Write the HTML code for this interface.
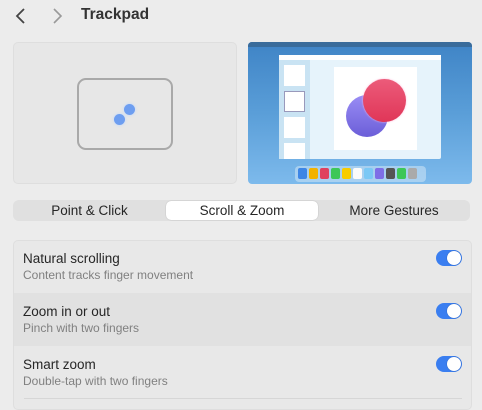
<!DOCTYPE html>
<html><head><style>
*{margin:0;padding:0;box-sizing:border-box}
body{width:482px;height:402px;overflow:hidden;background:#ececec;font-family:"Liberation Sans",sans-serif;position:relative}
.a{position:absolute}
.t{font-size:13.5px;color:#262626}
.s{font-size:12px;color:#808080}
.tg{position:absolute;left:436px;width:26px;height:16px;border-radius:8px;background:#3a7ef0}
.tg:after{content:"";position:absolute;right:1px;top:1px;width:14px;height:14px;border-radius:50%;background:#fff;box-shadow:0 0 1px rgba(0,0,0,.4)}
</style></head><body>
<svg class="a" style="left:14px;top:7px" width="14" height="18"><path d="M10 2 L3 9 L10 16" stroke="#444" stroke-width="1.8" fill="none"/></svg>
<svg class="a" style="left:50px;top:7px" width="14" height="18"><path d="M4 2 L11 9 L4 16" stroke="#999" stroke-width="1.6" fill="none"/></svg>
<div class="a" style="left:81px;top:6px;font-size:15.5px;font-weight:bold;color:#333">Trackpad</div>

<div class="a" style="left:13px;top:42px;width:224px;height:142px;background:#e7e7e7;border:1px solid #dedede;border-radius:5px"></div>
<div class="a" style="left:77px;top:78px;width:96px;height:72px;border:2px solid #a9a9a9;border-radius:9px"></div>
<div class="a" style="left:124px;top:104px;width:11px;height:11px;border-radius:50%;background:#6e9ef0;box-shadow:0 0 3px #bcd6ff"></div>
<div class="a" style="left:114px;top:114px;width:11px;height:11px;border-radius:50%;background:#6e9ef0;box-shadow:0 0 3px #bcd6ff"></div>

<div class="a" style="left:248px;top:42px;width:224px;height:142px;border-radius:4px;background:linear-gradient(#3f84c6,#5a9ed8 50%,#7dbaec);overflow:hidden">
<div class="a" style="left:0;top:0;width:224px;height:5px;background:#3a6c9b"></div>
<div class="a" style="left:31px;top:13px;width:162px;height:104px;background:#e6f3fb;border-radius:2px">
<div class="a" style="left:0;top:0;width:162px;height:5px;background:#fff"></div>
<div class="a" style="left:0;top:5px;width:31px;height:99px;background:#c9e3f3"></div>
<div class="a" style="left:5px;top:10px;width:21px;height:21px;background:#fff"></div>
<div class="a" style="left:5px;top:36px;width:21px;height:21px;background:#fff;border:1px solid #99b"></div>
<div class="a" style="left:5px;top:62px;width:21px;height:21px;background:#fff"></div>
<div class="a" style="left:5px;top:88px;width:21px;height:16px;background:#fff"></div>
<div class="a" style="left:55px;top:12px;width:83px;height:83px;background:#fff"></div>
<div class="a" style="left:67px;top:40px;width:42px;height:42px;border-radius:50%;background:linear-gradient(#9a8df5,#6b5ed8)"></div>
<div class="a" style="left:84px;top:24px;width:43px;height:43px;border-radius:50%;background:linear-gradient(#ec5b7a,#e03658);box-shadow:0 0 2px #fbd"></div>
</div>
<div class="a" style="left:47px;top:124px;width:131px;height:16px;background:rgba(200,225,245,.6);border-radius:4px;display:flex;gap:2px;padding:2px 3px">
<i style="width:9px;height:11px;background:#3d86e6;border-radius:2px"></i><i style="width:9px;height:11px;background:#f2b200;border-radius:2px"></i><i style="width:9px;height:11px;background:#e0405e;border-radius:2px"></i><i style="width:9px;height:11px;background:#3dc758;border-radius:2px"></i><i style="width:9px;height:11px;background:#f7cc00;border-radius:2px"></i><i style="width:9px;height:11px;background:#fafafa;border-radius:2px"></i><i style="width:9px;height:11px;background:#7bc8f5;border-radius:2px"></i><i style="width:9px;height:11px;background:#7e6ee6;border-radius:2px"></i><i style="width:9px;height:11px;background:#555;border-radius:2px"></i><i style="width:9px;height:11px;background:#3dc758;border-radius:2px"></i><i style="width:9px;height:11px;background:#aaa;border-radius:2px"></i>
</div>
</div>

<div class="a" style="left:13px;top:200px;width:457px;height:21px;background:#e0e0e0;border-radius:6px"></div>
<div class="a" style="left:166px;top:201px;width:152px;height:19px;background:#fff;border-radius:5px;box-shadow:0 0 1px rgba(0,0,0,.3)"></div>
<div class="a t" style="left:13px;top:203px;width:153px;text-align:center">Point &amp; Click</div>
<div class="a t" style="left:166px;top:203px;width:152px;text-align:center">Scroll &amp; Zoom</div>
<div class="a t" style="left:318px;top:203px;width:152px;text-align:center">More Gestures</div>

<div class="a" style="left:13px;top:240px;width:459px;height:170px;background:#e8e8e8;border:1px solid #dedede;border-radius:5px;overflow:hidden">
<div class="a" style="left:0;top:52px;width:459px;height:53px;background:#e1e1e1"></div>
<div class="a" style="left:10px;top:157px;width:438px;height:1px;background:#d6d6d6"></div>
</div>
<div class="a t" style="left:23px;top:251px">Natural scrolling</div>
<div class="a s" style="left:23px;top:268px">Content tracks finger movement</div>
<div class="tg" style="top:250px"></div>
<div class="a t" style="left:23px;top:304px">Zoom in or out</div>
<div class="a s" style="left:23px;top:321px">Pinch with two fingers</div>
<div class="tg" style="top:303px"></div>
<div class="a t" style="left:23px;top:357px">Smart zoom</div>
<div class="a s" style="left:23px;top:374px">Double-tap with two fingers</div>
<div class="tg" style="top:356px"></div>
</body></html>
